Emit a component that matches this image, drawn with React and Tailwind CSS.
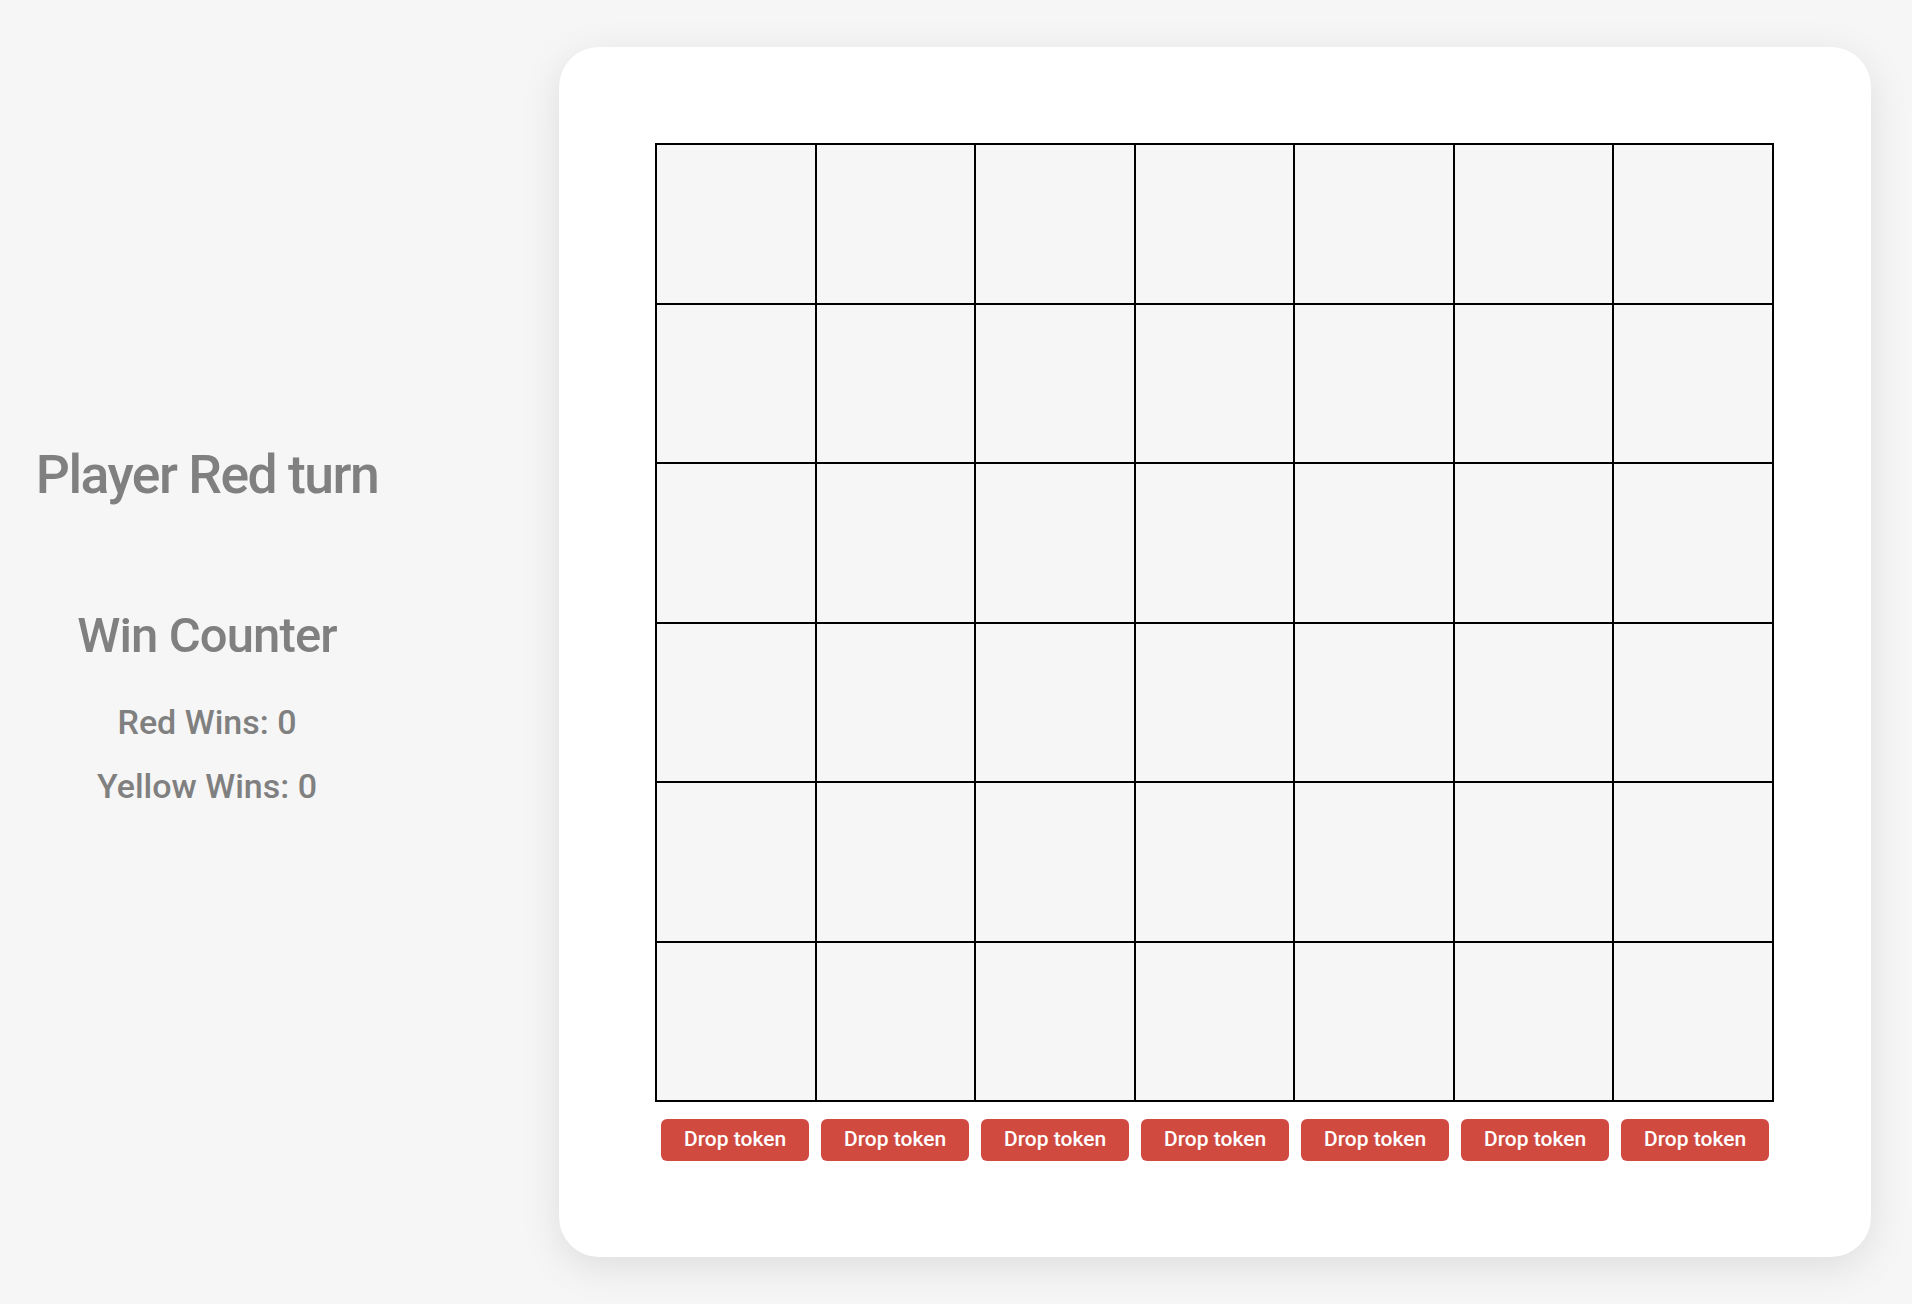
const COLS = 7;
const ROWS = 6;

export default function App() {
  const board = Array.from({ length: ROWS }, () => Array(COLS).fill(null));

  return (
    <div
      className="w-screen h-screen bg-[#f6f6f6] flex items-center overflow-hidden"
      style={{ fontFamily: "Roboto, 'Liberation Sans', sans-serif" }}
    >
      <div className="w-[414px] self-stretch flex flex-col items-center pt-[448px] text-[#808080] font-medium">
        <h1 className="text-[53.5px] leading-none tracking-[-1.5px]">Player Red turn</h1>
        <h2 className="mt-[109px] text-[49px] leading-none tracking-[-0.9px]">Win Counter</h2>
        <p className="mt-[45px] text-[34px] leading-none">Red Wins: 0</p>
        <p className="mt-[30px] text-[34px] leading-none">Yellow Wins: 0</p>
      </div>

      <div className="ml-[145px] w-[1312px] bg-white rounded-[40px] p-24 shadow-[0_10px_40px_rgba(0,0,0,0.10)]">
        <div className="grid grid-cols-[repeat(7,157.5px)] gap-[2px] p-[2px] bg-black w-fit">
          {board.map((row, r) =>
            row.map((cell, c) => (
              <div key={`${r}-${c}`} className="h-[157.5px] bg-[#f6f6f6]" />
            ))
          )}
        </div>
        <div className="grid grid-cols-[repeat(7,160px)] mt-[17px]">
          {Array.from({ length: COLS }).map((_, i) => (
            <button
              key={i}
              type="button"
              className="mx-[6px] h-[42px] rounded-md bg-[#d14a40] text-white text-[21px] font-medium"
            >
              Drop token
            </button>
          ))}
        </div>
      </div>
    </div>
  );
}
